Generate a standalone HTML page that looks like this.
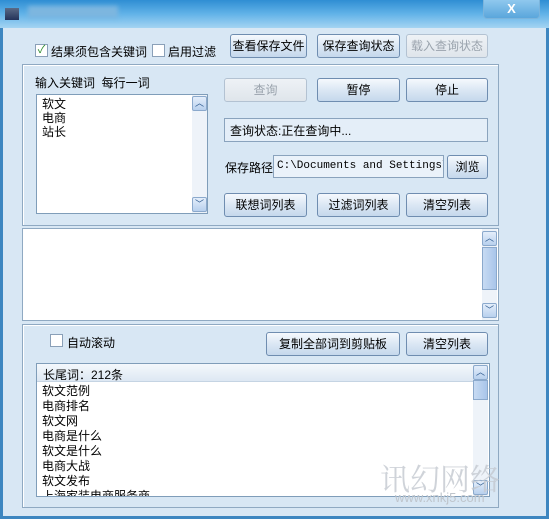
<!DOCTYPE html><html><head><meta charset="utf-8"><style>
*{box-sizing:border-box;margin:0;padding:0}
body{width:549px;height:519px;overflow:hidden;background:#3d86c0;font:12px "Liberation Sans","Noto Sans CJK SC",sans-serif;color:#000;position:relative}
.a{position:absolute}
#title{left:0;top:0;width:549px;height:28px;background:linear-gradient(#2f8ed3,#62b3e8 50%,#a4d4f2)}
#body{left:3px;top:28px;width:543px;height:488px;background:#d8e7f4}
.btn{position:absolute;height:24px;border:1px solid #6f8db0;border-radius:3px;background:linear-gradient(#f5f9fd,#dbe7f4 50%,#c5d8ec);text-align:center;line-height:22px;font-size:12px;white-space:nowrap}
.dis{color:#9aa3ad;border-color:#b3c2d2;background:linear-gradient(#eef2f6,#dfe5eb)}
.grp{position:absolute;border:1px solid #8fa9c2;box-shadow:inset 1px 1px 0 #fff}
.cb{position:absolute;width:13px;height:13px;border:1px solid #8aa0b8;background:#fff}
.white{position:absolute;background:#fff;border:1px solid #7f9db9}
.sb{position:absolute;background:#eef3f9;width:15px}
.arr{position:absolute;width:15px;height:15px;border:1px solid #8ba9cc;border-radius:2px;background:linear-gradient(#e4eefb,#b8d0ee);color:#2d5a8e;font-size:9px;text-align:center;line-height:13px}
.t{position:absolute;white-space:nowrap;font-size:12px}
</style></head><body>
<div class="a" id="title"></div>
<div class="a" style="left:5px;top:8px;width:14px;height:12px;background:linear-gradient(#5a6a86,#24335a)"></div>
<div class="a" style="left:28px;top:6px;width:90px;height:12px;background:#7db6df;filter:blur(2px)"></div>
<div class="a" style="left:483px;top:0;width:57px;height:19px;border:1px solid #7bb4dc;border-top:0;border-radius:0 0 4px 4px;background:linear-gradient(#8fc8ee,#5aa6dc);color:#fff;font-weight:bold;text-align:center;line-height:18px;font-size:13px">X</div>
<div class="a" id="body"></div>

<div class="cb" style="left:35px;top:44px;color:#2a8a2a;font-size:11px;line-height:11px;text-align:center">✓</div>
<div class="t" style="left:51px;top:43px">结果须包含关键词</div>
<div class="cb" style="left:152px;top:44px"></div>
<div class="t" style="left:168px;top:43px">启用过滤</div>
<div class="btn" style="left:230px;top:34px;width:77px">查看保存文件</div>
<div class="btn" style="left:317px;top:34px;width:83px">保存查询状态</div>
<div class="btn dis" style="left:406px;top:34px;width:82px">载入查询状态</div>

<div class="grp" style="left:22px;top:64px;width:477px;height:162px"></div>
<div class="t" style="left:35px;top:74px">输入关键词&nbsp; 每行一词</div>
<div class="white" style="left:36px;top:94px;width:172px;height:120px"></div>
<div class="t" style="left:42px;top:97px;line-height:14px">软文<br>电商<br>站长</div>
<div class="sb" style="left:192px;top:95px;height:118px"></div>
<div class="arr" style="left:192px;top:96px">︿</div>
<div class="arr" style="left:192px;top:197px">﹀</div>
<div class="btn dis" style="left:224px;top:78px;width:83px">查询</div>
<div class="btn" style="left:317px;top:78px;width:83px">暂停</div>
<div class="btn" style="left:406px;top:78px;width:82px">停止</div>
<div class="a" style="left:224px;top:118px;width:264px;height:24px;border:1px solid #8aa3bd;background:#e4eef8"></div>
<div class="t" style="left:230px;top:122px">查询状态:正在查询中...</div>
<div class="t" style="left:225px;top:159px">保存路径</div>
<div class="a" style="left:273px;top:155px;width:171px;height:23px;border:1px solid #8aa3bd;background:#eaf2fa;overflow:hidden;white-space:nowrap;font:11px 'Liberation Mono',monospace;line-height:20px;padding-left:3px">C:\Documents and Settings\Administrator</div>
<div class="btn" style="left:447px;top:155px;width:41px">浏览</div>
<div class="btn" style="left:224px;top:193px;width:83px">联想词列表</div>
<div class="btn" style="left:317px;top:193px;width:83px">过滤词列表</div>
<div class="btn" style="left:406px;top:193px;width:82px">清空列表</div>

<div class="white" style="left:22px;top:228px;width:477px;height:93px;border-color:#8fa9c2"></div>
<div class="sb" style="left:482px;top:229px;height:91px"></div>
<div class="arr" style="left:482px;top:231px">︿</div>
<div class="a" style="left:482px;top:247px;width:15px;height:43px;border:1px solid #8ba9cc;background:linear-gradient(90deg,#c7dbf3,#a9c5ea)"></div>
<div class="arr" style="left:482px;top:303px">﹀</div>

<div class="grp" style="left:22px;top:324px;width:477px;height:184px"></div>
<div class="cb" style="left:50px;top:334px"></div>
<div class="t" style="left:67px;top:334px">自动滚动</div>
<div class="btn" style="left:266px;top:332px;width:134px">复制全部词到剪贴板</div>
<div class="btn" style="left:406px;top:332px;width:82px">清空列表</div>

<div class="white" style="left:36px;top:363px;width:454px;height:134px;overflow:hidden"></div>
<div class="a" style="left:37px;top:364px;width:436px;height:18px;background:linear-gradient(#f4f8fc,#dde8f3);border-bottom:1px solid #c5d4e3"></div>
<div class="t" style="left:43px;top:366px">长尾词：212条</div>
<div class="t" style="left:42px;top:384px;line-height:15px;height:112px;overflow:hidden">软文范例<br>电商排名<br>软文网<br>电商是什么<br>软文是什么<br>电商大战<br>软文发布<br>上海家装电商服务商</div>
<div class="sb" style="left:473px;top:364px;height:132px"></div>
<div class="arr" style="left:473px;top:365px">︿</div>
<div class="a" style="left:473px;top:380px;width:15px;height:20px;border:1px solid #8ba9cc;background:linear-gradient(90deg,#c7dbf3,#a9c5ea)"></div>
<div class="arr" style="left:473px;top:480px">﹀</div>
<div class="t" style="left:380px;top:455px;font-size:30px;color:#c4c9d0;opacity:.8;font-family:'Noto Serif CJK SC',serif">讯幻网络</div>
<div class="t" style="left:395px;top:490px;font-size:13px;color:#bfc5cc">www.xnkj5.com</div>
</body></html>
